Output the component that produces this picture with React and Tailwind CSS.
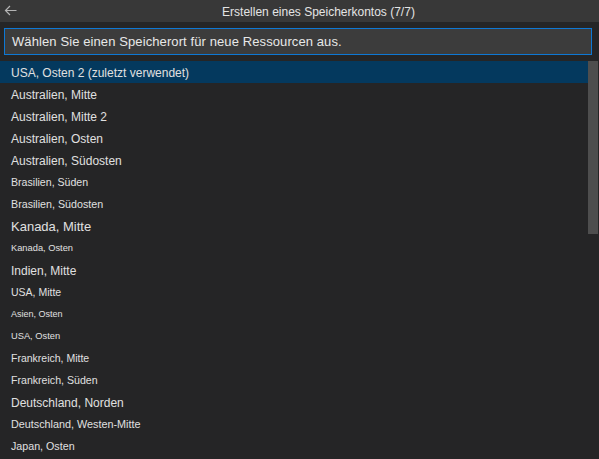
import React from 'react';

const regions = [
  { name: 'USA, Osten 2 (zuletzt verwendet)', size: 'text-[12px]', selected: true },
  { name: 'Australien, Mitte', size: 'text-[12px]' },
  { name: 'Australien, Mitte 2', size: 'text-[12px]' },
  { name: 'Australien, Osten', size: 'text-[12px]' },
  { name: 'Australien, Südosten', size: 'text-[12px]' },
  { name: 'Brasilien, Süden', size: 'text-[10.6px]' },
  { name: 'Brasilien, Südosten', size: 'text-[10.7px]' },
  { name: 'Kanada, Mitte', size: 'text-[13px]' },
  { name: 'Kanada, Osten', size: 'text-[9.3px]' },
  { name: 'Indien, Mitte', size: 'text-[12px]' },
  { name: 'USA, Mitte', size: 'text-[10.5px]' },
  { name: 'Asien, Osten', size: 'text-[9px]' },
  { name: 'USA, Osten', size: 'text-[9.3px]' },
  { name: 'Frankreich, Mitte', size: 'text-[10.5px]' },
  { name: 'Frankreich, Süden', size: 'text-[10.6px]' },
  { name: 'Deutschland, Norden', size: 'text-[12px]' },
  { name: 'Deutschland, Westen-Mitte', size: 'text-[10.8px]' },
  { name: 'Japan, Osten', size: 'text-[10.7px]' },
];

const App = () => {
  return (
    <div className="w-[599px] h-[459px] bg-[#252526] overflow-hidden flex flex-col text-[#e0e0e0]" style={{ fontFamily: '"Liberation Sans", Arial, sans-serif' }}>
      <div className="h-[22px] bg-[#383838] flex items-center relative shrink-0">
        <svg className="absolute left-[4px] top-[5px]" width="13" height="11" viewBox="0 0 13 11" fill="none" stroke="#b4b4b4" strokeWidth="1.2">
          <path d="M12.5 5.5H1.5M6 1L1.5 5.5L6 10" />
        </svg>
        <div className="w-full text-center text-[12px] pt-[1px] pl-[38px] text-[#e4e4e4]">Erstellen eines Speicherkontos (7/7)</div>
      </div>
      <div className="px-[4px] pt-[6px] pr-[7px] shrink-0">
        <div className="h-[27px] border border-[#0e78d4] bg-[#3c3c3c] flex items-center pl-[7px] text-[13px] tracking-[0.1px] text-[#e8e8e8]">
          Wählen Sie einen Speicherort für neue Ressourcen aus.
        </div>
      </div>
      <div className="flex mt-[6px] flex-1 min-h-0">
        <div className="flex-1 flex flex-col">
          {regions.map((r) => (
            <div
              key={r.name}
              className={`h-[22px] shrink-0 flex items-center pl-[11px] pt-[1px] ${r.size} ${r.selected ? 'bg-[#04395e]' : ''}`}
            >
              {r.name}
            </div>
          ))}
        </div>
        <div className="w-[10px] mr-[1px] flex flex-col">
          <div className="h-[173px] bg-[#4e4e4e]" />
        </div>
      </div>
    </div>
  );
};

export default App;
